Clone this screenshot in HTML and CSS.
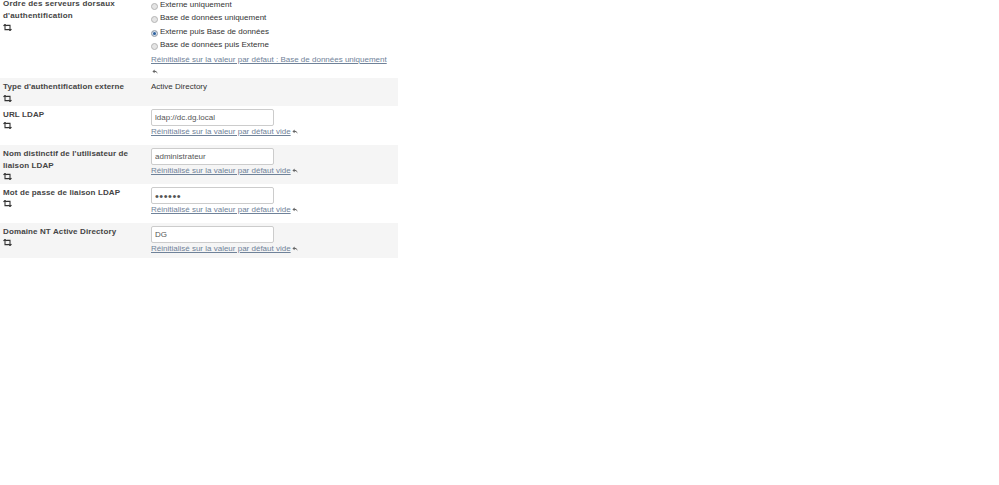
FILE: index.html
```html
<!DOCTYPE html>
<html lang="fr">
<head>
  <meta charset="UTF-8">
  <title>Authentification</title>
  <link rel="stylesheet" href="styles.css">
</head>
<body>
  <svg class="sprites" width="0" height="0">
    <symbol id="retweet" viewBox="0 0 9 7">
      <path d="M0.5 1.8 L2 0.4 L3.5 1.8 M2 1 V5.6 H5.5 M8.5 5.2 L7 6.6 L5.5 5.2 M7 6 V1.4 H3.5" fill="none" stroke="#333" stroke-width="1.1"/>
    </symbol>
    <symbol id="undo" viewBox="0 0 6 6">
      <path d="M2.6 0.6 L0.4 2.4 L2.6 4.2 V3 C4 3 5 3.4 5.6 5.2 C5.6 3 4.4 1.8 2.6 1.8 Z" fill="#666"/>
    </symbol>
  </svg>

  <div class="settings">
    <div class="row row-first">
      <div class="label">
        <div class="label-text">Ordre des serveurs dorsaux d'authentification</div>
        <svg class="icon-retweet"><use href="#retweet"/></svg>
      </div>
      <div class="field">
        <label class="radio"><input type="radio" name="order"> Externe uniquement</label>
        <label class="radio"><input type="radio" name="order"> Base de données uniquement</label>
        <label class="radio"><input type="radio" name="order" checked> Externe puis Base de données</label>
        <label class="radio"><input type="radio" name="order"> Base de données puis Externe</label>
        <div class="reset reset-long"><a href="#">Réinitialisé sur la valeur par défaut : Base de données uniquement</a> <svg class="icon-undo"><use href="#undo"/></svg></div>
      </div>
    </div>

    <div class="row row-alt row-short">
      <div class="label">
        <div class="label-text">Type d'authentification externe</div>
        <svg class="icon-retweet"><use href="#retweet"/></svg>
      </div>
      <div class="field field-static">Active Directory</div>
    </div>

    <div class="row">
      <div class="label">
        <div class="label-text">URL LDAP</div>
        <svg class="icon-retweet"><use href="#retweet"/></svg>
      </div>
      <div class="field">
        <input class="text-input" type="text" value="ldap://dc.dg.local">
        <div class="reset"><a href="#">Réinitialisé sur la valeur par défaut vide</a> <svg class="icon-undo"><use href="#undo"/></svg></div>
      </div>
    </div>

    <div class="row row-alt">
      <div class="label">
        <div class="label-text">Nom distinctif de l'utilisateur de liaison LDAP</div>
        <svg class="icon-retweet"><use href="#retweet"/></svg>
      </div>
      <div class="field">
        <input class="text-input" type="text" value="administrateur">
        <div class="reset"><a href="#">Réinitialisé sur la valeur par défaut vide</a> <svg class="icon-undo"><use href="#undo"/></svg></div>
      </div>
    </div>

    <div class="row">
      <div class="label">
        <div class="label-text">Mot de passe de liaison LDAP</div>
        <svg class="icon-retweet"><use href="#retweet"/></svg>
      </div>
      <div class="field">
        <input class="text-input text-input-password" type="password" value="secret">
        <div class="reset"><a href="#">Réinitialisé sur la valeur par défaut vide</a> <svg class="icon-undo"><use href="#undo"/></svg></div>
      </div>
    </div>

    <div class="row row-alt row-last">
      <div class="label">
        <div class="label-text">Domaine NT Active Directory</div>
        <svg class="icon-retweet"><use href="#retweet"/></svg>
      </div>
      <div class="field">
        <input class="text-input" type="text" value="DG">
        <div class="reset"><a href="#">Réinitialisé sur la valeur par défaut vide</a> <svg class="icon-undo"><use href="#undo"/></svg></div>
      </div>
    </div>
  </div>
</body>
</html>
```

FILE: styles.css
```css
body {
  margin: 0;
  background-color: #ffffff;
  color: #333333;
  font-family: "Liberation Sans", Arial, sans-serif;
  font-size: 8px;
  line-height: 12px;
}
.sprites {
  display: block;
  height: 0;
}
.settings {
  width: 398px;
}
.row {
  display: flex;
  height: 39px;
  box-sizing: border-box;
  padding-top: 2px;
}
.row-first {
  height: 80px;
  margin-top: -2px;
  padding-top: 0;
}
.row-short {
  height: 28px;
  padding-top: 3px;
}
.row-last {
  height: 35px;
}
.row-alt {
  background-color: #f5f5f5;
}
.label {
  width: 151px;
  flex: none;
  box-sizing: border-box;
  padding: 1px 14px 0 3px;
}
.row-first .label,
.row-short .label {
  padding-top: 0;
}
.label-text {
  font-weight: bold;
  letter-spacing: 0.12px;
  color: #444444;
}
.row-first .label-text {
  letter-spacing: 0.2px;
}
.icon-retweet {
  display: block;
  width: 9px;
  height: 7px;
  margin-top: 1px;
}
.row-first .icon-retweet,
.row-short .icon-retweet {
  margin-top: 2px;
}
.field {
  flex: 1;
  min-width: 0;
}
.field-static {
  color: #333333;
}
.radio {
  display: flex;
  align-items: center;
  gap: 2px;
  height: 13.5px;
}
.radio input {
  appearance: none;
  width: 7px;
  height: 7px;
  margin: 3px 0 0;
  border: 1px solid #b5b5b5;
  border-radius: 50%;
  background-color: #e4e4e4;
}
.radio input:checked {
  background-color: #2a5f9e;
  box-shadow: inset 0 0 0 1px #dfe6ee;
}
.text-input {
  display: block;
  width: 123px;
  height: 17px;
  margin-top: 1px;
  box-sizing: border-box;
  padding: 0 3px;
  border: 1px solid #cccccc;
  border-radius: 2px;
  background-color: #ffffff;
  color: #555555;
  font-family: inherit;
  font-size: 8px;
}
.text-input-password {
  font-size: 11px;
  letter-spacing: 0.5px;
}
.reset-long {
  margin-top: 2px;
}
.reset-long .icon-undo {
  display: block;
  margin: 3px 0 0 1px;
}
.reset a {
  color: #6f8299;
  text-decoration: underline;
}
.icon-undo {
  display: inline-block;
  width: 6px;
  height: 6px;
  margin-left: -1px;
  vertical-align: -1px;
}
```
